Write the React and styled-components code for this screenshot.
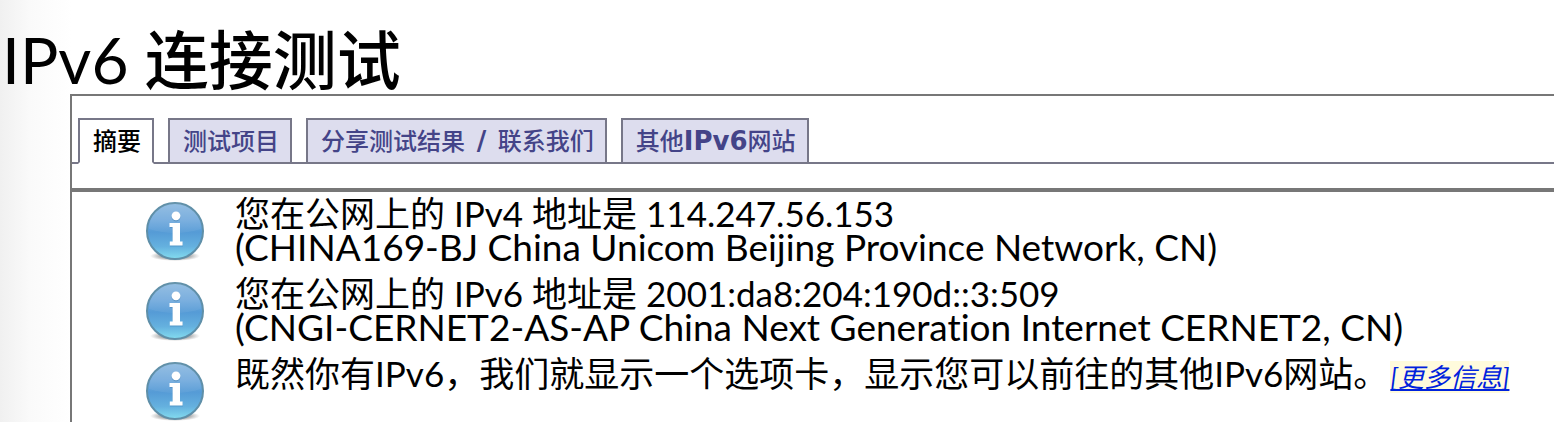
import React, { useState } from "react";
import styled, { createGlobalStyle } from "styled-components";

const GlobalStyle = createGlobalStyle`
  html { min-height: 100%; background: #fff; }
  body {
    margin: 0;
    color: #000;
    font-family: Lato, "Noto Sans CJK SC", sans-serif;
    font-variant-ligatures: none;
    background: linear-gradient(to right, #f0f0f0, #fafafa 30px, #fff 72px);
    overflow: hidden;
  }
`;

const Page = styled.main`
  padding-top: 29px;
`;

const Title = styled.h1`
  margin: 0;
  padding: 0 0 3px 2px;
  font-size: 64px;
  line-height: 62px;
  font-weight: 500;
  white-space: nowrap;
`;

const TitleLatin = styled.span`
  font-weight: 400;
`;

const Panel = styled.section`
  margin-left: 70px;
  border: solid #777;
  border-width: 2px 0 0 2px;
  background: #fff;
`;

const TabList = styled.div`
  display: flex;
  gap: 14px;
  padding: 22px 6px 0;
  border-bottom: 2px solid #778;
`;

const Tab = styled.button`
  height: 46px;
  margin: 0 0 -2px;
  padding: 2px 11px 0 13px;
  border: 2px solid #778;
  border-bottom-color: ${(p) => (p.$active ? "#fff" : "#778")};
  background: ${(p) => (p.$active ? "#fff" : "#dde")};
  color: ${(p) => (p.$active ? "#000" : "#448")};
  font: 500 24px/40px "DejaVu Sans", "Noto Sans CJK SC", sans-serif;
  white-space: nowrap;
  cursor: pointer;
`;

const TabLatin = styled.span`
  font-size: 26px;
  font-weight: 700;
  line-height: 1;
`;

const Slash = styled(TabLatin)`
  margin: 0 4px;
`;

const Results = styled.ul`
  margin: 24px 0 0;
  padding: 0;
  border-top: 4px solid #777;
  list-style: none;
`;

const Result = styled.li`
  display: flex;
  gap: 28px;
  height: 80px;
  padding-left: 71px;
`;

const InfoSvg = styled.svg`
  flex: none;
  width: 64px;
  height: 73px;
  padding-top: 8px;
  box-sizing: border-box;
`;

const Message = styled.p`
  margin: 0;
  padding-top: 4px;
  font-size: 35px;
  line-height: 34px;
  white-space: nowrap;
`;

const Network = styled.span`
  display: block;
  font-size: 37px;
  line-height: 34px;
`;

const MoreLink = styled.a`
  margin-left: 2px;
  background: #fffbdc;
  color: #02d;
  font-size: 26px;
  font-style: italic;
  text-underline-offset: 2px;
  text-decoration-thickness: 2px;
  text-decoration-skip-ink: none;
`;

function InfoIcon() {
  return (
    <InfoSvg viewBox="0 0 64 65" aria-hidden="true">
      <defs>
        <linearGradient id="ball" x1="0" y1="0" x2="0" y2="1">
          <stop offset="0" stopColor="#8fbbe2" />
          <stop offset="0.3" stopColor="#74abdd" />
          <stop offset="0.52" stopColor="#559bd6" />
          <stop offset="0.78" stopColor="#65b1df" />
          <stop offset="1" stopColor="#84dcef" />
        </linearGradient>
        <radialGradient id="shade">
          <stop offset="0.5" stopColor="#555" stopOpacity="0.6" />
          <stop offset="1" stopColor="#777" stopOpacity="0" />
        </radialGradient>
      </defs>
      <ellipse cx="32" cy="56" rx="25" ry="5" fill="url(#shade)" />
      <circle cx="32" cy="31" r="28" fill="url(#ball)" stroke="#5f8fa8" strokeWidth="2" />
      <path d="M6 29a26 26 0 0 1 52 0Q32 37 6 29Z" fill="#fff" opacity="0.06" />
      <circle cx="33" cy="17" r="4.4" fill="#3979aa" opacity="0.5" />
      <circle cx="33" cy="15.8" r="4.4" fill="#fff" />
      <path d="M27 24h10v18h3v4.6H27V42h2.6V28H27z" fill="#3979aa" opacity="0.4" />
      <path d="M26.5 23H37v18.4h2.6v4H26.8v-4h2.8V27h-3.1z" fill="#fff" />
    </InfoSvg>
  );
}

const tabs = [
  { id: "summary", label: "摘要" },
  { id: "tests", label: "测试项目" },
  { id: "share", label: <>分享测试结果 <Slash>/</Slash> 联系我们</> },
  { id: "sites", label: <>其他<TabLatin>IPv6</TabLatin>网站</> },
];

export default function App() {
  const [active, setActive] = useState("summary");
  return (
    <>
      <GlobalStyle />
      <Page>
        <Title>
          <TitleLatin>IPv6</TitleLatin> 连接测试
        </Title>
        <Panel>
          <TabList role="tablist">
            {tabs.map(({ id, label }) => (
              <Tab
                key={id}
                type="button"
                role="tab"
                aria-selected={id === active}
                $active={id === active}
                onClick={() => setActive(id)}
              >
                {label}
              </Tab>
            ))}
          </TabList>
          <Results>
            <Result>
              <InfoIcon />
              <Message>
                您在公网上的 IPv4 地址是 114.247.56.153
                <Network>(CHINA169-BJ China Unicom Beijing Province Network, CN)</Network>
              </Message>
            </Result>
            <Result>
              <InfoIcon />
              <Message>
                您在公网上的 IPv6 地址是 2001:da8:204:190d::3:509
                <Network>(CNGI-CERNET2-AS-AP China Next Generation Internet CERNET2, CN)</Network>
              </Message>
            </Result>
            <Result>
              <InfoIcon />
              <Message>
                既然你有IPv6，我们就显示一个选项卡，显示您可以前往的其他IPv6网站。
                <MoreLink href="#more">[更多信息]</MoreLink>
              </Message>
            </Result>
          </Results>
        </Panel>
      </Page>
    </>
  );
}
